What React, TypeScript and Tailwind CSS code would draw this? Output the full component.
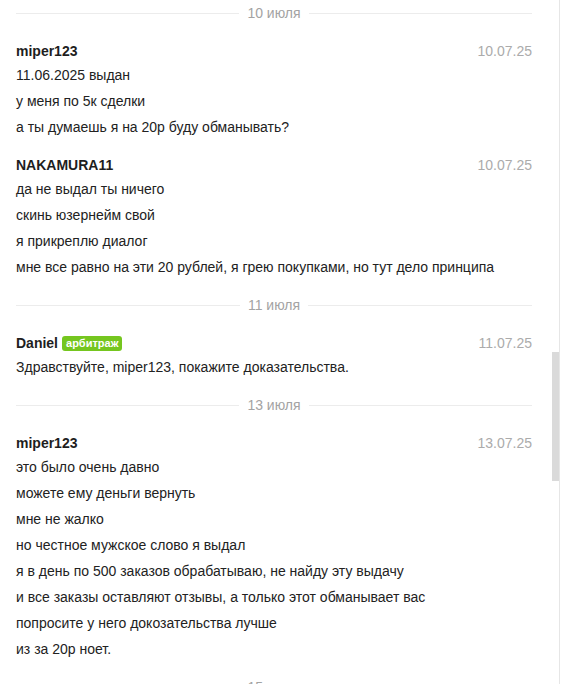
const font = { fontFamily: '"Liberation Sans", Arial, sans-serif' };

type Msg = { author: string; date: string; lines: string[]; arbiter?: boolean };

const feed: ({ day: string } | Msg)[] = [
  { day: "10 июля" },
  {
    author: "miper123",
    date: "10.07.25",
    lines: ["11.06.2025 выдан", "у меня по 5к сделки", "а ты думаешь я на 20р буду обманывать?"],
  },
  {
    author: "NAKAMURA11",
    date: "10.07.25",
    lines: [
      "да не выдал ты ничего",
      "скинь юзернейм свой",
      "я прикреплю диалог",
      "мне все равно на эти 20 рублей, я грею покупками, но тут дело принципа",
    ],
  },
  { day: "11 июля" },
  {
    author: "Daniel",
    date: "11.07.25",
    arbiter: true,
    lines: ["Здравствуйте, miper123, покажите доказательства."],
  },
  { day: "13 июля" },
  {
    author: "miper123",
    date: "13.07.25",
    lines: [
      "это было очень давно",
      "можете ему деньги вернуть",
      "мне не жалко",
      "но честное мужское слово я выдал",
      "я в день по 500 заказов обрабатываю, не найду эту выдачу",
      "и все заказы оставляют отзывы, а только этот обманывает вас",
      "попросите у него докозательства лучше",
      "из за 20р ноет.",
    ],
  },
  { day: "15 июля" },
];

function DayDivider({ day, first }: { day: string; first?: boolean }) {
  return (
    <div className={first ? "" : "pt-[12px]"}>
      <div className="flex items-center gap-[8px] h-[26px]">
        <div className="flex-1 h-px bg-[#ececec]" />
        <span className="text-[14px] text-[#a3a3a3] leading-[26px]">{day}</span>
        <div className="flex-1 h-px bg-[#ececec]" />
      </div>
    </div>
  );
}

function Message({ m }: { m: Msg }) {
  return (
    <div className="pt-[14px]">
      <div className="flex items-center justify-between h-[22px]">
        <div className="flex items-center gap-[4px]">
          <span className="text-[14px] font-bold text-[#1e1e1e]">{m.author}</span>
          {m.arbiter && (
            <span className="h-[15px] px-[4px] rounded-[3px] bg-[#75c61f] text-white text-[11px] font-bold leading-[15px]">
              арбитраж
            </span>
          )}
        </div>
        <span className="text-[14px] text-[#ababab]">{m.date}</span>
      </div>
      {m.lines.map((l, i) => (
        <div key={i} className="text-[14px] leading-[26px] text-[#222]">
          {l}
        </div>
      ))}
    </div>
  );
}

export default function App() {
  return (
    <div style={font} className="w-[575px] h-[684px] bg-white overflow-hidden flex">
      <div className="w-[552px] pl-[16px] pr-[20px]">
        {feed.map((item, i) =>
          "day" in item ? (
            <DayDivider key={i} day={item.day} first={i === 0} />
          ) : (
            <Message key={i} m={item} />
          )
        )}
      </div>
      {/* scrollbar */}
      <div className="w-[7px] flex flex-col">
        <div className="h-[352px]" />
        <div className="h-[129px] bg-[#dadada]" />
      </div>
      <div className="w-px bg-[#e6e6e6]" />
    </div>
  );
}
